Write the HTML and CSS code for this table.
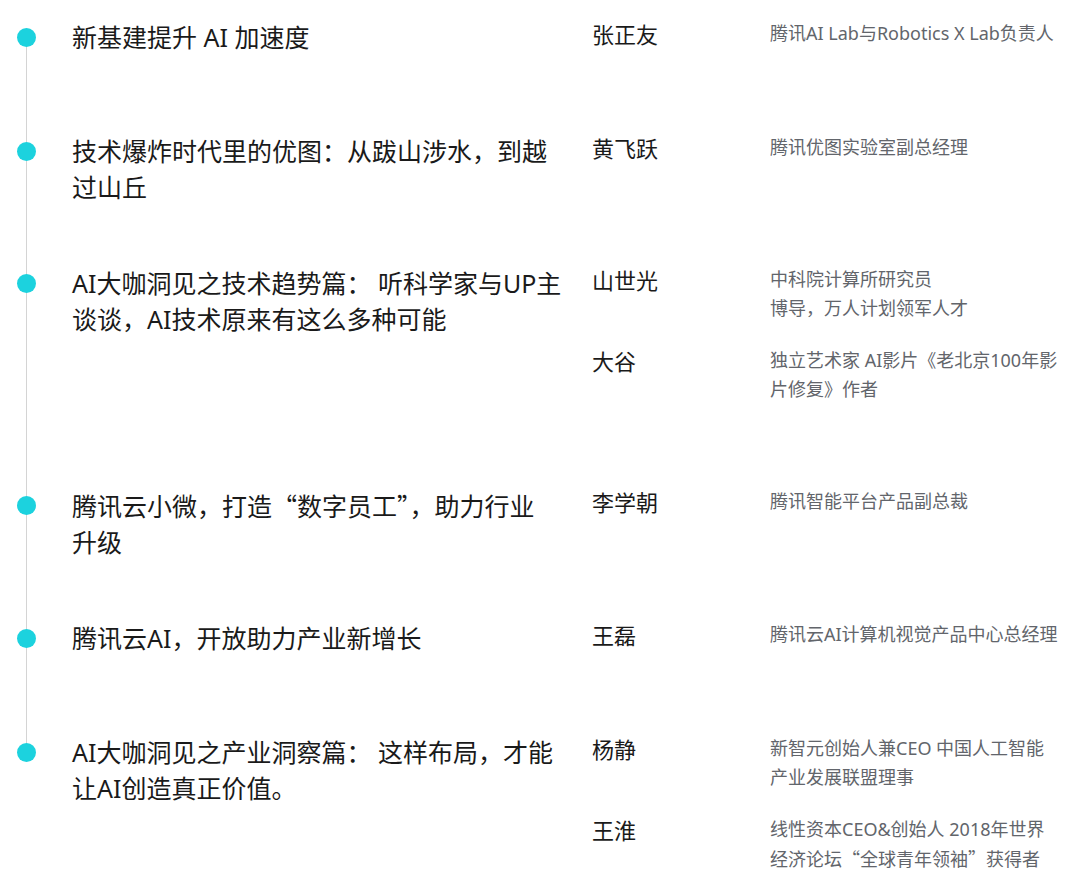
FILE: index.html
```html
<!DOCTYPE html>
<html lang="zh-CN">
<head>
  <meta charset="UTF-8">
  <meta name="viewport" content="width=device-width, initial-scale=1.0">
  <title>议程</title>
  <link rel="stylesheet" href="styles.css">
</head>
<body>

  <div class="agenda">

    <div class="item">
      <span class="dot"></span>
      <div class="topic">新基建提升 AI 加速度</div>
      <div class="speakers">
        <div class="speaker">
          <div class="name">张正友</div>
          <div class="role">腾讯AI Lab与Robotics X Lab负责人</div>
        </div>
      </div>
    </div>

    <div class="item">
      <span class="dot"></span>
      <div class="topic">技术爆炸时代里的优图：从跋山涉水，到越<br>过山丘</div>
      <div class="speakers">
        <div class="speaker">
          <div class="name">黄飞跃</div>
          <div class="role">腾讯优图实验室副总经理</div>
        </div>
      </div>
    </div>

    <div class="item">
      <span class="dot"></span>
      <div class="topic">AI大咖洞见之技术趋势篇： 听科学家与UP主<br>谈谈，AI技术原来有这么多种可能</div>
      <div class="speakers">
        <div class="speaker">
          <div class="name">山世光</div>
          <div class="role">中科院计算所研究员<br>博导，万人计划领军人才</div>
        </div>
        <div class="speaker">
          <div class="name">大谷</div>
          <div class="role">独立艺术家 AI影片《老北京100年影<br>片修复》作者</div>
        </div>
      </div>
    </div>

    <div class="item">
      <span class="dot"></span>
      <div class="topic">腾讯云小微，打造<span class="q">“</span>数字员工<span class="q">”</span>，助力行业<br>升级</div>
      <div class="speakers">
        <div class="speaker">
          <div class="name">李学朝</div>
          <div class="role">腾讯智能平台产品副总裁</div>
        </div>
      </div>
    </div>

    <div class="item">
      <span class="dot"></span>
      <div class="topic">腾讯云AI，开放助力产业新增长</div>
      <div class="speakers">
        <div class="speaker">
          <div class="name">王磊</div>
          <div class="role">腾讯云AI计算机视觉产品中心总经理</div>
        </div>
      </div>
    </div>

    <div class="item">
      <span class="dot"></span>
      <div class="topic">AI大咖洞见之产业洞察篇： 这样布局，才能<br>让AI创造真正价值。</div>
      <div class="speakers">
        <div class="speaker">
          <div class="name">杨静</div>
          <div class="role">新智元创始人兼CEO 中国人工智能<br>产业发展联盟理事</div>
        </div>
        <div class="speaker">
          <div class="name">王淮</div>
          <div class="role">线性资本CEO&amp;创始人 2018年世界<br>经济论坛<span class="q">“</span>全球青年领袖<span class="q">”</span>获得者</div>
        </div>
      </div>
    </div>

  </div>

</body>
</html>
```

FILE: styles.css
```css
body {
  margin: 0;
  background-color: #ffffff;
  font-family: "Noto Sans", "Noto Sans CJK SC", sans-serif;
  color: #1a1a1a;
}

.agenda {
  padding-top: 19px;
}

.item {
  position: relative;
  display: flex;
  padding-left: 72px;
  padding-bottom: 60px;
}

.item:last-child {
  padding-bottom: 0;
}

.item:last-child .speaker:last-child {
  margin-bottom: 0;
}

/* line down to the next dot */
.item:not(:last-child)::before {
  content: "";
  position: absolute;
  left: 26px;
  top: 18px;
  width: 1px;
  height: 100%;
  background-color: #d4d4d4;
}

.dot {
  position: absolute;
  left: 17px;
  top: 9px;
  width: 19px;
  height: 19px;
  border-radius: 50%;
  background-color: #1cd2de;
}

.topic {
  flex: none;
  width: 520px;
  font-size: 25px;
  line-height: 36px;
}

/* full-width quote marks, as in the Chinese font */
.q {
  font-family: "Noto Sans CJK SC", sans-serif;
}

.speakers {
  display: flex;
  flex-direction: column;
}

.speaker {
  display: flex;
  margin-bottom: 23px;
}

.name {
  flex: none;
  width: 178px;
  font-size: 22px;
  line-height: 31px;
}

.role {
  width: 310px;
  font-size: 18px;
  line-height: 29px;
  color: #62656b;
  white-space: nowrap;
}
```
